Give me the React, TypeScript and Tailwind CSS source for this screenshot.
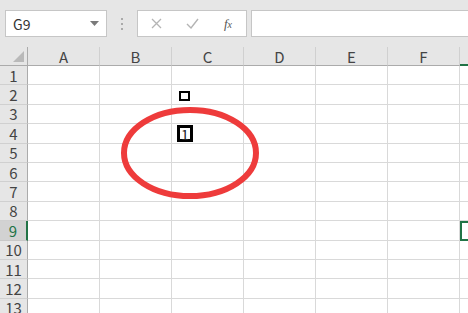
import { Fragment } from "react";

const cols = ["A", "B", "C", "D", "E", "F", "G"];
const rows = Array.from({ length: 13 }, (_, i) => i + 1);

const font = `font-["Noto_Sans_CJK_SC","Liberation_Sans",sans-serif]`;

const cellClass = (c: string, r: number) => {
  if (c === "G" && r === 9) return "border-2 border-r-0 border-[#217346]";
  if (c === "G") return "border-b border-[#d9d9d9]";
  return "border-b border-r border-[#d9d9d9]";
};

const App = () => {
  return (
    <div className={`w-[468px] h-[313px] overflow-hidden bg-[#e6e6e6] text-[#444] ${font}`}>
      {/* formula bar */}
      <div className="h-[47px] flex items-start pt-[10px] pl-[5px]">
        <div className="w-[102px] h-[27px] bg-white border border-[#c6c6c6] flex items-center justify-between px-[7px]">
          <span className="text-[14px] text-[#333] leading-none">G9</span>
          <svg width="9" height="5" viewBox="0 0 9 5">
            <path d="M0 0h9L4.5 5z" fill="#7a7a7a" />
          </svg>
        </div>
        <div className="w-[30px] h-[27px] flex flex-col items-center justify-center gap-[3px]">
          <span className="w-[2px] h-[2px] bg-[#aaa]" />
          <span className="w-[2px] h-[2px] bg-[#aaa]" />
          <span className="w-[2px] h-[2px] bg-[#aaa]" />
        </div>
        <div className="w-[110px] h-[27px] bg-white border border-[#c6c6c6] flex items-center">
          <div className="w-[36px] flex justify-center">
            <svg width="11" height="11" viewBox="0 0 11 11">
              <path d="M1 1l9 9M10 1l-9 9" stroke="#b4b4b4" strokeWidth="1.3" />
            </svg>
          </div>
          <div className="w-[36px] flex justify-center">
            <svg width="13" height="11" viewBox="0 0 13 11">
              <path d="M1 6l4 4 7-9" stroke="#b4b4b4" strokeWidth="1.4" fill="none" />
            </svg>
          </div>
          <div className="flex-1 flex justify-center">
            <span className="font-['Liberation_Serif',serif] italic text-[13px] text-[#555] leading-none">
              f<span className="text-[10px]">x</span>
            </span>
          </div>
        </div>
        <div className="ml-[4px] flex-1 h-[27px] bg-white border border-[#c6c6c6] border-r-0" />
      </div>

      {/* sheet */}
      <div className="relative">
        <div className="grid grid-cols-[28px_repeat(6,72px)_1fr]">
          {/* header row */}
          <div className="h-[19px] border-b border-r border-[#ababab] relative">
            <svg className="absolute right-[3px] bottom-[3px]" width="11" height="11" viewBox="0 0 11 11">
              <path d="M11 0v11H0z" fill="#b9b9b9" />
            </svg>
          </div>
          {cols.map((c) =>
            c === "G" ? (
              <div key={c} className="h-[19px] border-b border-[#ababab] relative">
                <span className="absolute left-0 bottom-[-1px] h-[2px] w-full bg-[#217346]" />
              </div>
            ) : (
              <div
                key={c}
                className="h-[19px] border-b border-r border-b-[#ababab] border-r-[#d0d0d0] flex items-center justify-center text-[15px] leading-none"
              >
                {c}
              </div>
            )
          )}

          {rows.map((r) => (
            <Fragment key={r}>
              <div
                className={`h-[19.4px] flex items-center justify-center text-[15px] leading-none ${
                  r === 9
                    ? "bg-[#d2d2d2] text-[#217346] border-b border-r-2 border-r-[#217346] border-b-[#c8c8c8]"
                    : "border-b border-r border-r-[#ababab] border-b-[#d0d0d0]"
                }`}
              >
                {r}
              </div>
              {cols.map((c) => (
                <div key={c} className={`h-[19.4px] bg-white ${cellClass(c, r)}`} />
              ))}
            </Fragment>
          ))}
        </div>

        {/* shapes over the grid */}
        <div className="absolute left-[179px] top-[44px] w-[11px] h-[10px] border-2 border-black bg-white" />
        <div className="absolute left-[177px] top-[78px] w-[16px] h-[17px] border-[3px] border-black bg-white flex items-center justify-center text-[14px] leading-none text-[#222]">
          1
        </div>
        <svg className="absolute left-[118px] top-[57px]" width="144" height="98" viewBox="0 0 144 98">
          <ellipse cx="72" cy="49" rx="66" ry="43" fill="none" stroke="#ee3b3b" strokeWidth="6" />
        </svg>
      </div>
    </div>
  );
};

export default App;
